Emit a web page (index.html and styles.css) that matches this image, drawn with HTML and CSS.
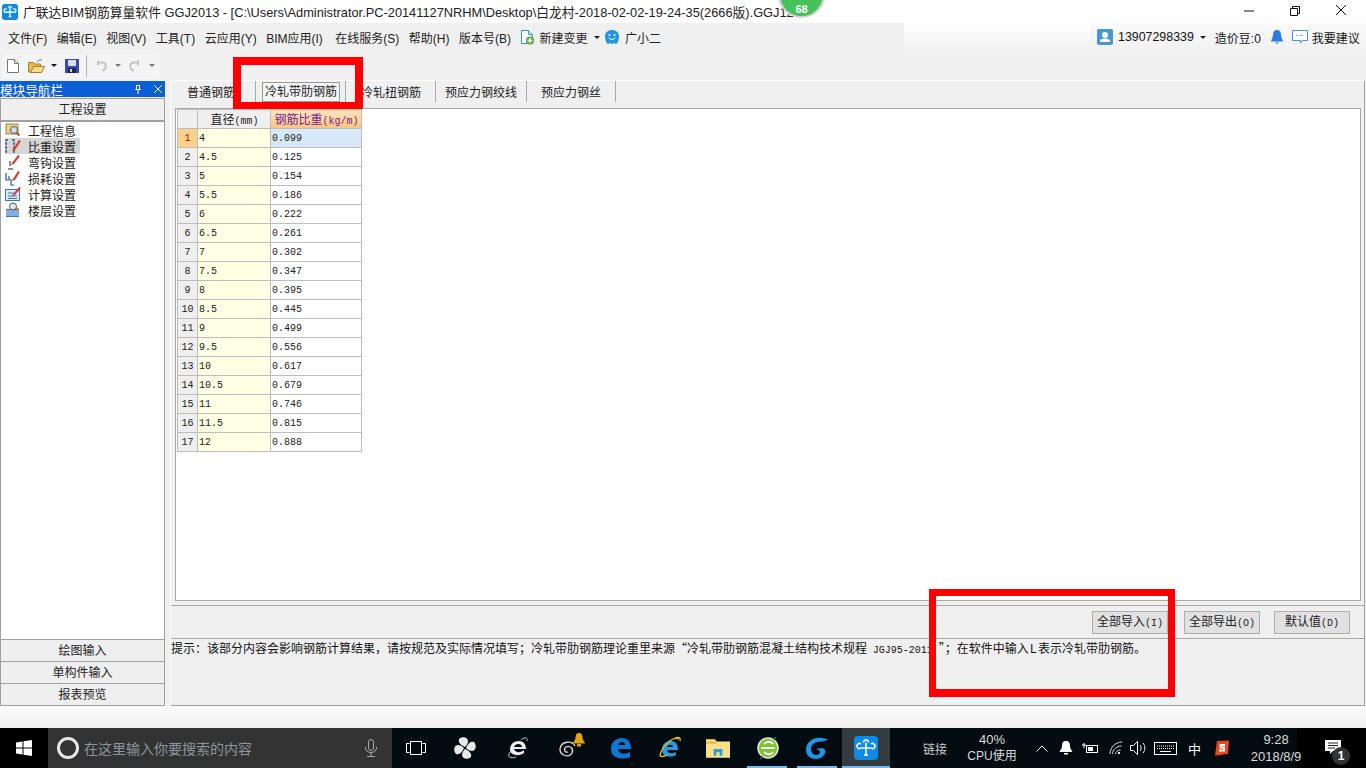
FILE: index.html
```html
<!DOCTYPE html>
<html lang="zh-CN">
<head>
    <meta charset="UTF-8">
    <title>广联达BIM钢筋算量软件 GGJ2013</title>
    <link rel="stylesheet" href="styles.css">
</head>
<body>

<div class="titlebar">
    <svg class="app-icon" viewBox="0 0 24 24"><rect width="24" height="24" rx="4" fill="#0d8be6"/><path d="M12 6.500v12.500M12 12H7a2.500 2.500 0 110-4M12 12h5a2.500 2.500 0 100-4M9.500 6.500a2.500 2.500 0 015 0M10 19h4" fill="none" stroke="#fff" stroke-width="1.900"/></svg>
    <span class="title-text">广联达BIM钢筋算量软件 GGJ2013 - [C:\Users\Administrator.PC-20141127NRHM\Desktop\白龙村-2018-02-02-19-24-35(2666版).GGJ12</span>
    <div class="win-buttons">
        <svg viewBox="0 0 46 23"><path d="M18 11h10" stroke="#111" fill="none"/></svg>
        <svg viewBox="0 0 46 23"><path d="M18.500 8.500h7v7h-7zM20.500 8.500v-2h7v7h-2" stroke="#111" fill="none"/></svg>
        <svg viewBox="0 0 46 23"><path d="M18 5l10 10M28 5l-10 10" stroke="#111" fill="none"/></svg>
    </div>
    <div class="score">68</div>
</div>

<div class="menubar">
    <div class="menu-left">
        <span>文件(F)</span><span>编辑(E)</span><span>视图(V)</span><span>工具(T)</span><span>云应用(Y)</span><span class="menu-bim">BIM应用(I)</span><span>在线服务(S)</span><span>帮助(H)</span><span>版本号(B)</span>
        <span class="menu-icon-item menu-change">
            <svg class="icon16" viewBox="0 0 16 16"><path d="M2.500 1.500h7l4 4v9h-11z" fill="#fff" stroke="#3a8fd8"/><path d="M9.500 1.500v4h4" fill="#cfe6f8" stroke="#3a8fd8"/><circle cx="11" cy="11.500" r="4" fill="#5aa83a"/><path d="M11 9v5M8.500 11.500h5" stroke="#fff" stroke-width="1.400"/></svg>
            新建变更<i class="caret caret-gap"></i>
        </span>
        <span class="menu-icon-item menu-helper">
            <svg class="icon16" viewBox="0 0 16 16"><path d="M8 1c4 0 7 2.500 7 6 0 5-2 8-3 8l-2-1-2 1-2-1-2 1c-1 0-3-3-3-8 0-3.500 3-6 7-6z" fill="#1f96e8"/><circle cx="5.500" cy="6" r="1" fill="#fff"/><circle cx="10.500" cy="6" r="1" fill="#fff"/><path d="M4.500 8.500c1.500 2.500 5.500 2.500 7 0" stroke="#fff" fill="none"/></svg>
            广小二
        </span>
    </div>
    <div class="menu-patch"></div>
    <div class="menu-right">
        <svg class="icon16" viewBox="0 0 16 16"><rect width="16" height="16" rx="2" fill="#4a97cf"/><circle cx="8" cy="6" r="3" fill="#fff"/><path d="M3 13v-1.500c0-1 2-2 5-2s5 1 5 2v1.500z" fill="#fff"/></svg>
        <span class="phone">13907298339</span>
        <i class="caret"></i>
        <span class="beans">造价豆:0</span>
        <svg class="bell" viewBox="0 0 12 14"><path d="M6 0c3 0 4 2.500 4 5 0 3 2 5 2 6.500H0C0 10 2 8 2 5c0-2.500 1-5 4-5z" fill="#2c7be5"/><path d="M4 12.500h4L6 14z" fill="#2c7be5"/></svg>
        <svg class="icon16" viewBox="0 0 16 16"><path d="M.5 1.500h15v10h-5l-2 2.500v-2.500h-8z" fill="#fff" stroke="#4a90d9"/><path d="M4 6.500h8" stroke="#4a90d9" stroke-dasharray="1 1.500"/></svg>
        <span class="suggest">我要建议</span>
    </div>
</div>

<div class="toolbar">
    <div class="tool-group">
        <svg class="tool-new" viewBox="0 0 12 14"><path d="M.5.500h7l4 4v9H.5z" fill="#fff" stroke="#777"/><path d="M7.500.500v4h4" fill="#ddd" stroke="#777"/></svg>
        <svg class="tool-open" viewBox="0 0 17 14"><path d="M.5 3.500h5l1 1.500h6v8H.5z" fill="#e9b949" stroke="#a77f2a"/><path d="M2.500 13.500l3-6h11l-3 6z" fill="#f8dd8a" stroke="#a77f2a"/><path d="M9 3c1-2 3-2.500 5-2" stroke="#3a7fc0" fill="none"/></svg>
        <i class="caret caret-dark"></i>
        <svg class="tool-save" viewBox="0 0 14 14"><rect width="14" height="14" fill="#3b4aa8"/><rect x="3" y="1" width="8" height="6" fill="#d9dcf0"/><rect x="3" y="9" width="8" height="5" fill="#1e2550"/><rect x="5" y="10" width="2" height="3" fill="#ccd"/></svg>
        <span class="tool-sep"></span>
        <svg class="tool-undo" viewBox="0 0 12 12"><path d="M3 2.500h4c5 0 5 7 0 8M3 .500v5" fill="none" stroke="#c4c4c4" stroke-width="2"/></svg>
        <i class="caret caret-gray"></i>
        <svg class="tool-redo" viewBox="0 0 12 12"><path d="M9 2.500H5c-5 0-5 7 0 8M9 .500v5" fill="none" stroke="#c4c4c4" stroke-width="2"/></svg>
        <i class="caret caret-gray"></i>
    </div>
</div>

<div class="workspace">
    <div class="nav-pane">
        <div class="nav-header">
            <span>模块导航栏</span>
            <svg class="nav-pin" viewBox="0 0 8 9"><path d="M2 .5h4M2.500.5v4h3v-4M1 4.500h6M4 4.500V9" stroke="#fff" fill="none"/></svg>
            <svg class="nav-close" viewBox="0 0 8 8"><path d="M0 0l8 8M8 0L0 8" stroke="#fff" fill="none"/></svg>
        </div>
        <div class="nav-btn nav-btn-top">工程设置</div>
        <ul class="nav-list">
            <li><svg class="icon16" viewBox="0 0 16 16"><rect x="1" y="2" width="12" height="10" fill="#e9cf85" stroke="#9a8550"/><circle cx="9" cy="8" r="3.500" fill="#cfe0f0" stroke="#555"/><path d="M11.500 10.500l3 3" stroke="#b0562a" stroke-width="2"/></svg>工程信息</li>
            <li class="active"><svg class="icon16" viewBox="0 0 16 16"><path d="M3 2H1v12h2M7 2h2v12H7" fill="none" stroke="#2a5a96" stroke-width="1.500" stroke-dasharray="3 1"/><path d="M8 11l6-9 2 1-6 9-3 1z" fill="#d8402a"/></svg>比重设置</li>
            <li><svg class="icon16" viewBox="0 0 16 16"><path d="M5 12V7M3 15h5" stroke="#222" fill="none"/><path d="M7 9l6-8 2 1-6 8-3 1z" fill="#d8402a"/></svg>弯钩设置</li>
            <li><svg class="icon16" viewBox="0 0 16 16"><path d="M1 3v7h3V6M6 9v6h3" stroke="#2a5a96" stroke-width="1.200" fill="none"/><path d="M8 9l5-8 2 1-5 8-3 1z" fill="#d8402a"/></svg>损耗设置</li>
            <li><svg class="icon16" viewBox="0 0 16 16"><rect x=".5" y="3.500" width="14" height="11" fill="#dbe9f6" stroke="#3a78b8"/><path d="M3 7h6M3 10h9M3 12.500h9" stroke="#3a78b8"/><path d="M8 8l6-7 2 1-6 7-3 1z" fill="#d8402a"/></svg>计算设置</li>
            <li><svg class="icon16" viewBox="0 0 16 16"><path d="M1 7h13v8H1z" fill="#3a78c8"/><path d="M1 9h13M1 11h13M1 13h13" stroke="#cfe2f6"/><circle cx="8" cy="4.500" r="3.500" fill="#dfe6ee" stroke="#555"/><path d="M11 6l3 2" stroke="#b0822a" stroke-width="2"/></svg>楼层设置</li>
        </ul>
        <div class="nav-btn">绘图输入</div>
        <div class="nav-btn">单构件输入</div>
        <div class="nav-btn">报表预览</div>
    </div>

    <div class="content-pane">
        <div class="tabs">
            <span class="tab tab-first">普通钢筋</span>
            <span class="tab tab-active-wrap"><b class="tab-active">冷轧带肋钢筋</b></span>
            <span class="tab tab-third">冷轧扭钢筋</span>
            <span class="tab tab-fourth">预应力钢绞线</span>
            <span class="tab tab-fifth">预应力钢丝</span>
        </div>
        <div class="table-frame">
            <table class="weights">
                <thead>
                    <tr><th class="row-head"></th><th class="dia-head">直径<em>(mm)</em></th><th class="weight-head">钢筋比重<em>(kg/m)</em></th></tr>
                </thead>
                <tbody>
                    <tr class="current"><th>1</th><td class="dia">4</td><td>0.099</td></tr>
                    <tr><th>2</th><td class="dia">4.5</td><td>0.125</td></tr>
                    <tr><th>3</th><td class="dia">5</td><td>0.154</td></tr>
                    <tr><th>4</th><td class="dia">5.5</td><td>0.186</td></tr>
                    <tr><th>5</th><td class="dia">6</td><td>0.222</td></tr>
                    <tr><th>6</th><td class="dia">6.5</td><td>0.261</td></tr>
                    <tr><th>7</th><td class="dia">7</td><td>0.302</td></tr>
                    <tr><th>8</th><td class="dia">7.5</td><td>0.347</td></tr>
                    <tr><th>9</th><td class="dia">8</td><td>0.395</td></tr>
                    <tr><th>10</th><td class="dia">8.5</td><td>0.445</td></tr>
                    <tr><th>11</th><td class="dia">9</td><td>0.499</td></tr>
                    <tr><th>12</th><td class="dia">9.5</td><td>0.556</td></tr>
                    <tr><th>13</th><td class="dia">10</td><td>0.617</td></tr>
                    <tr><th>14</th><td class="dia">10.5</td><td>0.679</td></tr>
                    <tr><th>15</th><td class="dia">11</td><td>0.746</td></tr>
                    <tr><th>16</th><td class="dia">11.5</td><td>0.815</td></tr>
                    <tr><th>17</th><td class="dia">12</td><td>0.888</td></tr>
                </tbody>
            </table>
        </div>
        <div class="button-bar">
            <button class="act-btn">全部导入<em>(I)</em></button>
            <button class="act-btn act-export">全部导出<em>(O)</em></button>
            <button class="act-btn">默认值<em>(D)</em></button>
        </div>
        <div class="hint">提示：该部分内容会影响钢筋计算结果，请按规范及实际情况填写；冷轧带肋钢筋理论重里来源“冷轧带肋钢筋混凝土结构技术规程 <em class="hint-code">JGJ95-2011</em>”；在软件中输入<em class="hint-letter">L</em>表示冷轧带肋钢筋。</div>
    </div>
</div>

<div class="strip"></div>

<div class="taskbar">
    <div class="start">
        <svg viewBox="0 0 16 16" class="icon16"><path d="M0 2.500l6.500-1v6H0zM7.500 1.300L16 0v7.500H7.500zM0 8.500h6.500v6L0 13.500zM7.500 8.500H16V16l-8.500-1.300z" fill="#fff"/></svg>
    </div>
    <div class="search">
        <span class="cortana"></span>
        <span class="search-text">在这里输入你要搜索的内容</span>
        <svg class="mic" viewBox="0 0 12 18"><rect x="3.500" y=".5" width="5" height="11" rx="2.500" fill="none" stroke="#aaa"/><path d="M.5 8v1c0 6 11 6 11 0V8M6 14v3M2 17.500h8" fill="none" stroke="#aaa"/></svg>
    </div>
    <div class="task-icons">
        <div class="task"><svg class="icon20" viewBox="0 0 20 14"><path d="M3.500 2.500H.5v9h3M16.500 2.500h3v9h-3" fill="none" stroke="#fff"/><rect x="4.500" y=".5" width="11" height="13" fill="none" stroke="#fff"/></svg></div>
        <div class="task"><svg class="icon24" viewBox="0 0 24 24"><path d="M12 11C8 9 5 7 6 3c3-3 9-2 9 2 0 2-1 4-3 6zM13 12c2-4 4-7 8-6 3 3 2 9-2 9-2 0-4-1-6-3zM12 13c4 2 7 4 6 8-3 3-9 2-9-2 0-2 1-4 3-6zM11 12c-2 4-4 7-8 6-3-3-2-9 2-9 2 0 4 1 6 3z" fill="#e8e8e8"/></svg></div>
        <div class="task"><svg class="icon24" viewBox="0 0 24 24"><path d="M4 14c0-6 4-9 9-9 5 0 7 4 7 8H8c1 4 7 4 10 1v3c-5 4-14 2-14-3zM8 11h8c0-4-7-4-8 0z" fill="#eee"/><path d="M15 4c3-3 7-3 6 1M4 16c-3 5 0 7 6 5" stroke="#ccc" fill="none"/></svg></div>
        <div class="task task-swirl">
            <svg class="icon24" viewBox="0 0 24 24"><path d="M20 10c-3-6-14-5-15 3 0 7 9 9 12 4 2-4-2-8-6-6-3 2-1 6 2 5" fill="none" stroke="#ddd" stroke-width="1.300"/></svg>
            <svg class="swirl-bell" viewBox="0 0 14 14"><path d="M7 0c2.500 0 3.500 2 3.500 4.500 0 3 2.500 4 2.500 6H1c0-2 2.500-3 2.500-6C3.500 2 4.500 0 7 0z" fill="#e5a400"/><rect x="5" y="11" width="4" height="2.500" fill="#e5a400"/></svg>
        </div>
        <div class="task"><svg class="icon24" viewBox="0 0 24 24"><path d="M2 13C2 6 7 2 13 2c6 0 9 5 9 11H9c0 5 7 6 12 3v5c-7 3-19 2-19-8zM9 9h7c0-4-6-4-7 0z" fill="#0a78d7"/></svg></div>
        <div class="task"><svg class="icon24" viewBox="0 0 24 24"><path d="M4 14C4 8 8 5 13 5c5 0 7 4 7 9H9c0 4 6 4 9 2v3c-5 3-14 2-14-5zM9 11h6c0-3-5-3-6 0z" fill="#2a9be0"/><path d="M21 3c-7-3-17 8-19 16-.5 2 4 2 7 0" fill="none" stroke="#f0c020" stroke-width="1.300"/><path d="M17 2c3-1 6-1 5 3" fill="none" stroke="#f0c020" stroke-width="1.300"/></svg></div>
        <div class="task"><svg class="icon24" viewBox="0 0 22 18"><path d="M0 1h8l2 2h12v15H0z" fill="#fbe08c"/><path d="M0 3h9l1 2H0z" fill="#e8b93f"/><path d="M7 16v-6h8v6h-2.500v-3h-3v3z" fill="#2aa0e0"/></svg></div>
        <div class="task running"><svg class="icon24" viewBox="0 0 24 24"><circle cx="12" cy="12" r="10" fill="#7cc42c" stroke="#e8e8e8" stroke-width="1.500"/><path d="M5 12h14M8 8c3-3 7-3 9 0M8 16c3 3 7 3 9 0" fill="none" stroke="#fff" stroke-width="1.800"/><path d="M20 1l-3 3M4 23l3-3" stroke="#1f9a2a"/></svg></div>
        <div class="task running"><svg class="icon24" viewBox="0 0 24 24"><path d="M23 3c-4 0-6-2-11-1C5 3 1 8 1 14s5 9 10 9 10-4 9-9l-2-2-7 1 4 2c0 3-2 4-4 4-3 0-5-3-5-6 0-4 3-7 7-7 4-1 6 0 10-3z" fill="#1a97ea"/></svg></div>
        <div class="task running task-active"><svg class="icon24" viewBox="0 0 24 24"><rect width="24" height="24" rx="4" fill="#0d8be6"/><path d="M12 6.500v12.500M12 12H7a2.500 2.500 0 110-4M12 12h5a2.500 2.500 0 100-4M9.500 6.500a2.500 2.500 0 015 0M10 19h4" fill="none" stroke="#fff" stroke-width="1.500"/></svg></div>
    </div>
    <div class="tray">
        <span class="tray-link">链接</span>
        <div class="tray-cpu"><span>40%</span><span class="tray-cpu-name">CPU使用</span></div>
        <svg class="tray-chevron" viewBox="0 0 12 7"><path d="M.5 6.500L6 1l5.500 5.500" fill="none" stroke="#fff"/></svg>
        <svg class="tray-bell" viewBox="0 0 14 14"><path d="M7 0c3 0 4 2 4 5 0 3 2 4 2.500 6H.5C1 9 3 8 3 5c0-3 1-5 4-5z" fill="#fff"/><rect x="5" y="12" width="4" height="1.500" fill="#fff"/></svg>
        <svg class="tray-batt" viewBox="0 0 16 12"><rect x="4.500" y="3.500" width="11" height="7" fill="none" stroke="#fff"/><rect x="6" y="5" width="5" height="4" fill="#fff"/><path d="M0 3h4M2 1v5" stroke="#fff"/></svg>
        <svg class="tray-wifi" viewBox="0 0 14 14"><path d="M1 13C1 7 6 1 13 1M3.500 13c0-4 4-8 9-8M6.500 13c0-2 2-4 5-4" fill="none" stroke="#ddd"/><rect x="9" y="11" width="2" height="2" fill="#fff"/></svg>
        <svg class="tray-vol" viewBox="0 0 16 14"><path d="M.5 4.500h3l4-4v13l-4-4h-3z" fill="none" stroke="#fff"/><path d="M10 4c1.500 2 1.500 4 0 6M13 2c2.500 3 2.500 7 0 10" fill="none" stroke="#fff"/></svg>
        <svg class="tray-kbd" viewBox="0 0 23 13"><rect x=".5" y=".5" width="22" height="12" fill="none" stroke="#fff"/><path d="M3 4h17M3 6.500h17" stroke="#fff" stroke-dasharray="1 1"/><path d="M6 9.500h11" stroke="#fff"/></svg>
        <span class="tray-ime">中</span>
        <svg class="tray-sogou" viewBox="0 0 16 16"><path d="M3 1l12-.5L14 14 1 15.500z" fill="#e8471c"/><path d="M11 5H6.500v2.500H10V10.500H5" fill="none" stroke="#fff" stroke-width="1.800"/></svg>
        <div class="tray-clock"><span>9:28</span><span>2018/8/9</span></div>
    </div>
    <div class="notify">
        <svg class="notify-icon" viewBox="0 0 16 15"><path d="M0 0h16v11H8l-3 3v-3H0z" fill="#fff"/><path d="M3 3h10M3 5.500h10M3 8h7" stroke="#222"/></svg>
        <span class="notify-count">1</span>
    </div>
</div>

<div class="mark mark-tab"></div>
<div class="mark mark-import"></div>

</body>
</html>
```

FILE: styles.css
```css
* {
    box-sizing: border-box;
}
body {
    font-family: "Liberation Sans", "Noto Sans CJK SC", sans-serif;
    font-size: 12px;
    color: #111;
    display: flex;
    flex-direction: column;
    width: 1366px;
    height: 768px;
    margin: 0;
    overflow: hidden;
    background: #f0f0f0;
}
em {
    font-style: normal;
    font-family: "Liberation Mono", "Noto Sans CJK SC", monospace;
    font-size: 10px;
}
ul {
    margin: 0;
    padding: 0;
    list-style: none;
}
.icon16 {
    width: 16px;
    height: 16px;
    flex: none;
}
.icon20 {
    width: 20px;
    height: 14px;
}
.icon24 {
    width: 24px;
    height: 24px;
}
.caret {
    display: inline-block;
    width: 0;
    height: 0;
    border-left: 3px solid transparent;
    border-right: 3px solid transparent;
    border-top: 3px solid #222;
    flex: none;
}
.caret-gap {
    margin-left: 1px;
}
.caret-dark {
    margin-left: 6px;
    border-top-color: #111;
}
.caret-gray {
    margin-left: 8px;
    border-top-color: #777;
}

/* title bar */
.titlebar {
    position: relative;
    display: flex;
    align-items: center;
    height: 23px;
    padding-left: 2px;
    background: #fff;
    overflow: hidden;
}
.app-icon {
    width: 16px;
    height: 16px;
    margin-right: 5px;
}
.title-text {
    font-size: 12.8px;
    white-space: nowrap;
    color: #222;
}
.win-buttons {
    display: flex;
    margin-left: auto;
    padding-right: 2px;
}
.win-buttons svg {
    width: 46px;
    height: 23px;
}
.score {
    position: absolute;
    left: 778px;
    top: -29px;
    width: 47px;
    height: 47px;
    padding-top: 29px;
    border-radius: 50%;
    border: 2px solid #cfd4cf;
    background: #45c25c;
    color: #fff;
    font-size: 11px;
    font-weight: bold;
    line-height: 14px;
    text-align: center;
}

/* menu */
.menubar {
    display: flex;
    align-items: center;
    height: 31px;
    padding-left: 8px;
    background: #f0f0f0;
}
.menu-left {
    display: flex;
    align-items: center;
    gap: 9.5px;
    padding-bottom: 3px;
    color: #222;
}
.menu-bim {
    margin-right: 3px;
}
.menu-icon-item {
    display: flex;
    align-items: center;
    gap: 3px;
}
.menu-change {
    margin-left: -2px;
    gap: 5px;
}
.menu-helper {
    gap: 5px;
    margin-left: -5px;
}
.menu-patch {
    width: 188px;
    height: 100%;
    margin-left: auto;
    background: linear-gradient(#fff, #f0f0f0);
}
.menu-right {
    display: flex;
    align-items: center;
    width: 273px;
    height: 100%;
    padding: 0 0 3px 4px;
    margin-left: 1px;
    background: linear-gradient(#fbfbfb, #f0f0f0);
}
.phone {
    margin-left: 5px;
    margin-right: 6px;
    font-size: 12.4px;
    color: #111;
}
.beans {
    margin-left: 9px;
    color: #112;
}
.bell {
    width: 12px;
    height: 14px;
    margin: 0 9px 0 10px;
}
.suggest {
    margin-left: 4px;
}

/* tool bar */
.toolbar {
    height: 26px;
    padding: 0 0 1px 2px;
}
.tool-group {
    display: flex;
    align-items: center;
    width: 158px;
    height: 100%;
    padding: 0 0 2px 5px;
    border-radius: 3px;
    background: #f4f4f4;
}
.tool-new {
    width: 12px;
    height: 14px;
    margin-right: 9px;
}
.tool-open {
    width: 17px;
    height: 14px;
}
.tool-save {
    width: 14px;
    height: 14px;
    margin-left: 8px;
}
.tool-sep {
    width: 1px;
    height: 22px;
    margin: 0 8px 0 7px;
    background: #b5b5b5;
}
.tool-undo,
.tool-redo {
    width: 12px;
    height: 12px;
}
.tool-redo {
    margin-left: 8px;
}

/* workspace */
.workspace {
    display: flex;
    flex: 1;
    min-height: 0;
}
.nav-pane {
    display: flex;
    flex-direction: column;
    width: 165px;
    padding-top: 1px;
    border-bottom: 1px solid #a0a0a0;
}
.nav-header {
    display: flex;
    align-items: center;
    height: 16px;
    flex: none;
    margin-bottom: 1px;
    background: #0a5ed7;
    color: #fff;
    font-size: 12.6px;
}
.nav-pin {
    width: 8px;
    height: 9px;
    margin-left: auto;
}
.nav-close {
    width: 8px;
    height: 8px;
    margin: 0 3px 0 12px;
}
.nav-btn {
    height: 22px;
    flex: none;
    padding-top: 1px;
    border: 1px solid #a0a0a0;
    border-bottom: 0;
    background: #efefef;
    font-size: 12px;
    line-height: 21px;
    text-align: center;
    color: #222;
}
.nav-btn-top {
    height: 23px;
    border-bottom: 1px solid #a0a0a0;
}
.nav-list {
    flex: 1;
    padding: 0 0 0 4px;
    border: 1px solid #a0a0a0;
    border-bottom: 0;
    background: #fff;
    color: #222;
}
.nav-list li {
    display: flex;
    align-items: center;
    gap: 7px;
    width: 75px;
    height: 16px;
    white-space: nowrap;
}
.nav-list .active {
    background: #d6d6d6;
}
.content-pane {
    display: flex;
    flex-direction: column;
    flex: 1;
    margin-left: 5px;
    margin-right: 1px;
    border-top: 1px solid #fff;
    border-left: 1px solid #fff;
    border-right: 1px solid #a0a0a0;
}
.tabs {
    display: flex;
    align-items: flex-start;
    height: 23px;
    flex: none;
    color: #222;
}
.tab {
    display: flex;
    align-items: center;
    height: 21px;
    border-right: 1px solid #a8a8a8;
}
.tab-first {
    width: 85px;
    padding-left: 16px;
}
.tab-active-wrap {
    width: 90px;
    padding-left: 6px;
}
.tab-active {
    width: 78px;
    height: 20px;
    margin-top: 1px;
    border: 1px solid #9a9a9a;
    background: #f4f4f4;
    font-weight: normal;
    line-height: 18px;
    text-align: center;
}
.tab-third {
    width: 90px;
    padding-left: 15px;
}
.tab-fourth {
    width: 91px;
    padding-left: 9px;
}
.tab-fifth {
    width: 89px;
    padding-left: 14px;
}
.table-frame {
    height: 493px;
    flex: none;
    margin: 4px 3px 4px 4px;
    padding: 0 0 0 1px;
    border: 1px solid #a8a8a8;
    background: #fff;
}
.weights {
    width: 185px;
    border-collapse: collapse;
    table-layout: fixed;
    font-family: "Liberation Mono", "Noto Sans CJK SC", monospace;
    font-size: 10px;
    color: #222;
}
.weights th,
.weights td {
    height: 19px;
    padding: 0 0 0 1px;
    border: 1px solid #bdbdbd;
    font-weight: normal;
    overflow: hidden;
    white-space: nowrap;
}
.weights tbody th {
    padding: 0;
    text-align: center;
    background: #efefef;
}
.weights thead th {
    font-size: 12px;
    text-align: center;
    background: #efefef;
}
.weights .row-head {
    width: 20px;
}
.weights .dia-head {
    width: 73px;
}
.weights .weight-head {
    background: linear-gradient(#fbe6bd, #f9c678);
    color: #7a189c;
}
.weights .dia {
    background: #ffffe4;
}
.weights .current th {
    background: #fdd18b;
    color: #8a1a10;
}
.weights .current td:last-child {
    background: #d7e8f8;
}
.button-bar {
    display: flex;
    justify-content: flex-end;
    align-items: center;
    height: 34px;
    flex: none;
    padding: 0 14px 0 0;
    gap: 14px;
    border-top: 1px solid #a8a8a8;
    border-bottom: 1px solid #a8a8a8;
}
.act-btn {
    width: 76px;
    height: 23px;
    padding: 0 0 3px;
    border: 1px solid #adadad;
    background: #e1e1e1;
    font-family: inherit;
    font-size: 12px;
    color: #222;
}
.act-export {
    margin-left: 2px;
}
.hint {
    flex: 1;
    padding-top: 1px;
    border-bottom: 1px solid #a0a0a0;
    font-family: "Noto Sans CJK SC", sans-serif;
    line-height: 15px;
    white-space: nowrap;
    color: #111;
}
.hint-code {
    margin: 0 6px 0 3px;
}
.hint-letter {
    margin: 0 1px;
    font-size: 12px;
}
.strip {
    height: 22px;
    flex: none;
    background: linear-gradient(#fcfcfc, #f0f0f0);
}

/* task bar */
.taskbar {
    display: flex;
    align-items: center;
    height: 40px;
    flex: none;
    background: #010b10;
    color: #ddd;
}
.start {
    display: flex;
    justify-content: center;
    align-items: center;
    width: 48px;
    height: 100%;
    background: #000;
}
.search {
    display: flex;
    align-items: center;
    width: 344px;
    height: 100%;
    padding-left: 9px;
    background: #333;
}
.cortana {
    width: 22px;
    height: 22px;
    border: 3px solid #e6e6e6;
    border-radius: 50%;
}
.search-text {
    margin-left: 5px;
    font-size: 14px;
    color: #8f959c;
}
.mic {
    width: 12px;
    height: 18px;
    margin-left: auto;
    margin-right: 15px;
}
.task-icons {
    display: flex;
    height: 100%;
}
.task {
    position: relative;
    display: flex;
    justify-content: center;
    align-items: center;
    width: 50px;
    height: 100%;
}
.task:first-child {
    width: 48px;
}
/* icons do not sit evenly on the real bar */
.task:nth-child(3),
.task:nth-child(7),
.task:nth-child(8) {
    padding-left: 6px;
}
.task:nth-child(4),
.task:nth-child(9) {
    padding-left: 4px;
}
.task:nth-child(5) {
    padding-left: 12px;
}
.task:nth-child(6) {
    padding-left: 10px;
}
.running::after {
    content: "";
    position: absolute;
    left: 7px;
    right: 3px;
    bottom: 0;
    height: 2px;
    background: #76b9ed;
}
.task-active {
    width: 48px;
    margin-left: 2px;
    background: #343c40;
}
.task-active::after {
    left: 0;
    right: 0;
}
.swirl-bell {
    position: absolute;
    left: 32px;
    top: 5px;
    width: 14px;
    height: 14px;
}
.tray {
    display: flex;
    align-items: center;
    flex: none;
    width: 407px;
    height: 100%;
    padding-left: 33px;
}
.tray-link {
    flex: none;
    margin-right: 21px;
    color: #ccc;
}
.tray-cpu,
.tray-clock {
    display: flex;
    flex-direction: column;
    align-items: center;
    flex: none;
    font-size: 13px;
    line-height: 17px;
    white-space: nowrap;
}
.tray-cpu {
    width: 48px;
}
.tray-cpu-name {
    font-size: 12px;
}
.tray-chevron {
    flex: none;
    width: 12px;
    height: 7px;
    margin-left: 20px;
}
.tray-bell {
    flex: none;
    width: 14px;
    height: 14px;
    margin-left: 11px;
}
.tray-batt {
    flex: none;
    width: 16px;
    height: 12px;
    margin-left: 9px;
}
.tray-wifi {
    flex: none;
    width: 14px;
    height: 14px;
    margin-left: 11px;
}
.tray-vol {
    flex: none;
    width: 16px;
    height: 14px;
    margin-left: 7px;
}
.tray-kbd {
    flex: none;
    width: 23px;
    height: 13px;
    margin-left: 8px;
}
.tray-ime {
    flex: none;
    margin-left: 11px;
    font-size: 13px;
    color: #fff;
}
.tray-sogou {
    flex: none;
    width: 16px;
    height: 16px;
    margin-left: 13px;
}
.tray-clock {
    position: relative;
    z-index: 1;
    width: 52px;
    margin-left: 20px;
    color: #ddd;
}
.notify {
    position: relative;
    flex: 1;
    height: 100%;
    background: #000;
}
.notify-icon {
    position: absolute;
    left: 28px;
    top: 12px;
    width: 16px;
    height: 15px;
}
.notify-count {
    position: absolute;
    left: 35px;
    top: 19px;
    width: 18px;
    height: 18px;
    border-radius: 50%;
    background: #333;
    color: #fff;
    font-size: 12px;
    font-weight: bold;
    line-height: 18px;
    text-align: center;
}

/* red callouts drawn over the screenshot */
.mark {
    position: absolute;
    border: 8px solid #f00;
}
.mark-tab {
    left: 233px;
    top: 57px;
    width: 130px;
    height: 52px;
    border-bottom-width: 7px;
}
.mark-import {
    left: 929px;
    top: 589px;
    width: 246px;
    height: 108px;
    border-width: 7px 7px 8px;
}
```
